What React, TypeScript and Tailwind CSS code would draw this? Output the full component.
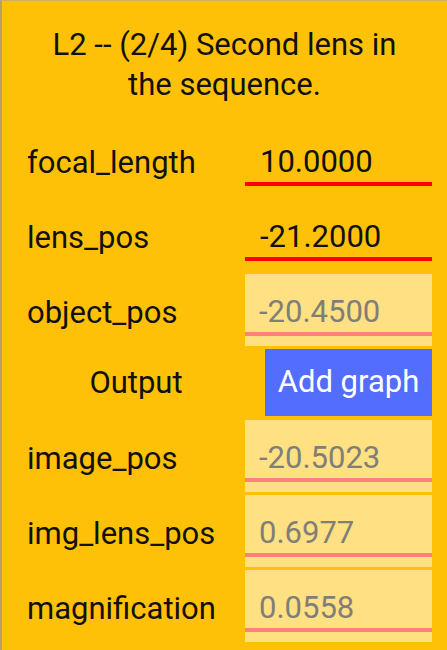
import React from "react";

type Row = { label: string; value: string; editable: boolean };

const inputsTop: Row[] = [
  { label: "focal_length", value: "10.0000", editable: true },
  { label: "lens_pos", value: "-21.2000", editable: true },
  { label: "object_pos", value: "-20.4500", editable: false },
];

const outputs: Row[] = [
  { label: "image_pos", value: "-20.5023", editable: false },
  { label: "img_lens_pos", value: "0.6977", editable: false },
  { label: "magnification", value: "0.0558", editable: false },
];

function FieldRow({ row }: { row: Row }) {
  return (
    <div className="grid grid-cols-[243px_187px] h-[72px]">
      <div className="pl-[25px] pt-[19px] leading-[40px] text-[31px] text-[#111] whitespace-nowrap">{row.label}</div>
      {row.editable ? (
        <div className="flex flex-col pt-[18px] pb-[10px]">
          <div className="h-[40px] leading-[40px] pl-[15px] text-[31px] text-[#111] border-b-[4px] border-[#ff0000] box-content">
            {row.value}
          </div>
        </div>
      ) : (
        <div className="flex flex-col pt-[18px] pb-[10px] bg-[#ffe082]">
          <div className="h-[40px] leading-[40px] pl-[14px] text-[31px] text-[#7f7f78] border-b-[4px] border-[#ff8080] box-content">
            {row.value}
          </div>
        </div>
      )}
    </div>
  );
}

export default function App() {
  return (
    <div
      className="w-[447px] h-[650px] bg-[#ffc107] border-l-2 border-l-[#b3a06c] border-t border-t-[#cdb266] overflow-hidden"
      style={{ fontFamily: "Roboto, 'Noto Sans', sans-serif" }}
    >
      <div className="pt-[24px] text-center text-[31px] leading-[40px] text-[#111] px-[35px]">
        L2 -- (2/4) Second lens in the sequence.
      </div>
      <div className="mt-[19px] flex flex-col gap-[3px]">
        {inputsTop.map((r) => (
          <FieldRow key={r.label} row={r} />
        ))}
        <div className="grid grid-cols-[243px_187px] h-[68px]">
          <div className="pl-[25px] flex items-center justify-center text-[31px] text-[#111]">Output</div>
          <div className="flex justify-end">
            <button className="w-[167px] h-[67px] bg-[#536dfe] text-white text-[31px] flex items-center justify-center whitespace-nowrap">
              Add graph
            </button>
          </div>
        </div>
        {outputs.map((r) => (
          <FieldRow key={r.label} row={r} />
        ))}
      </div>
    </div>
  );
}
